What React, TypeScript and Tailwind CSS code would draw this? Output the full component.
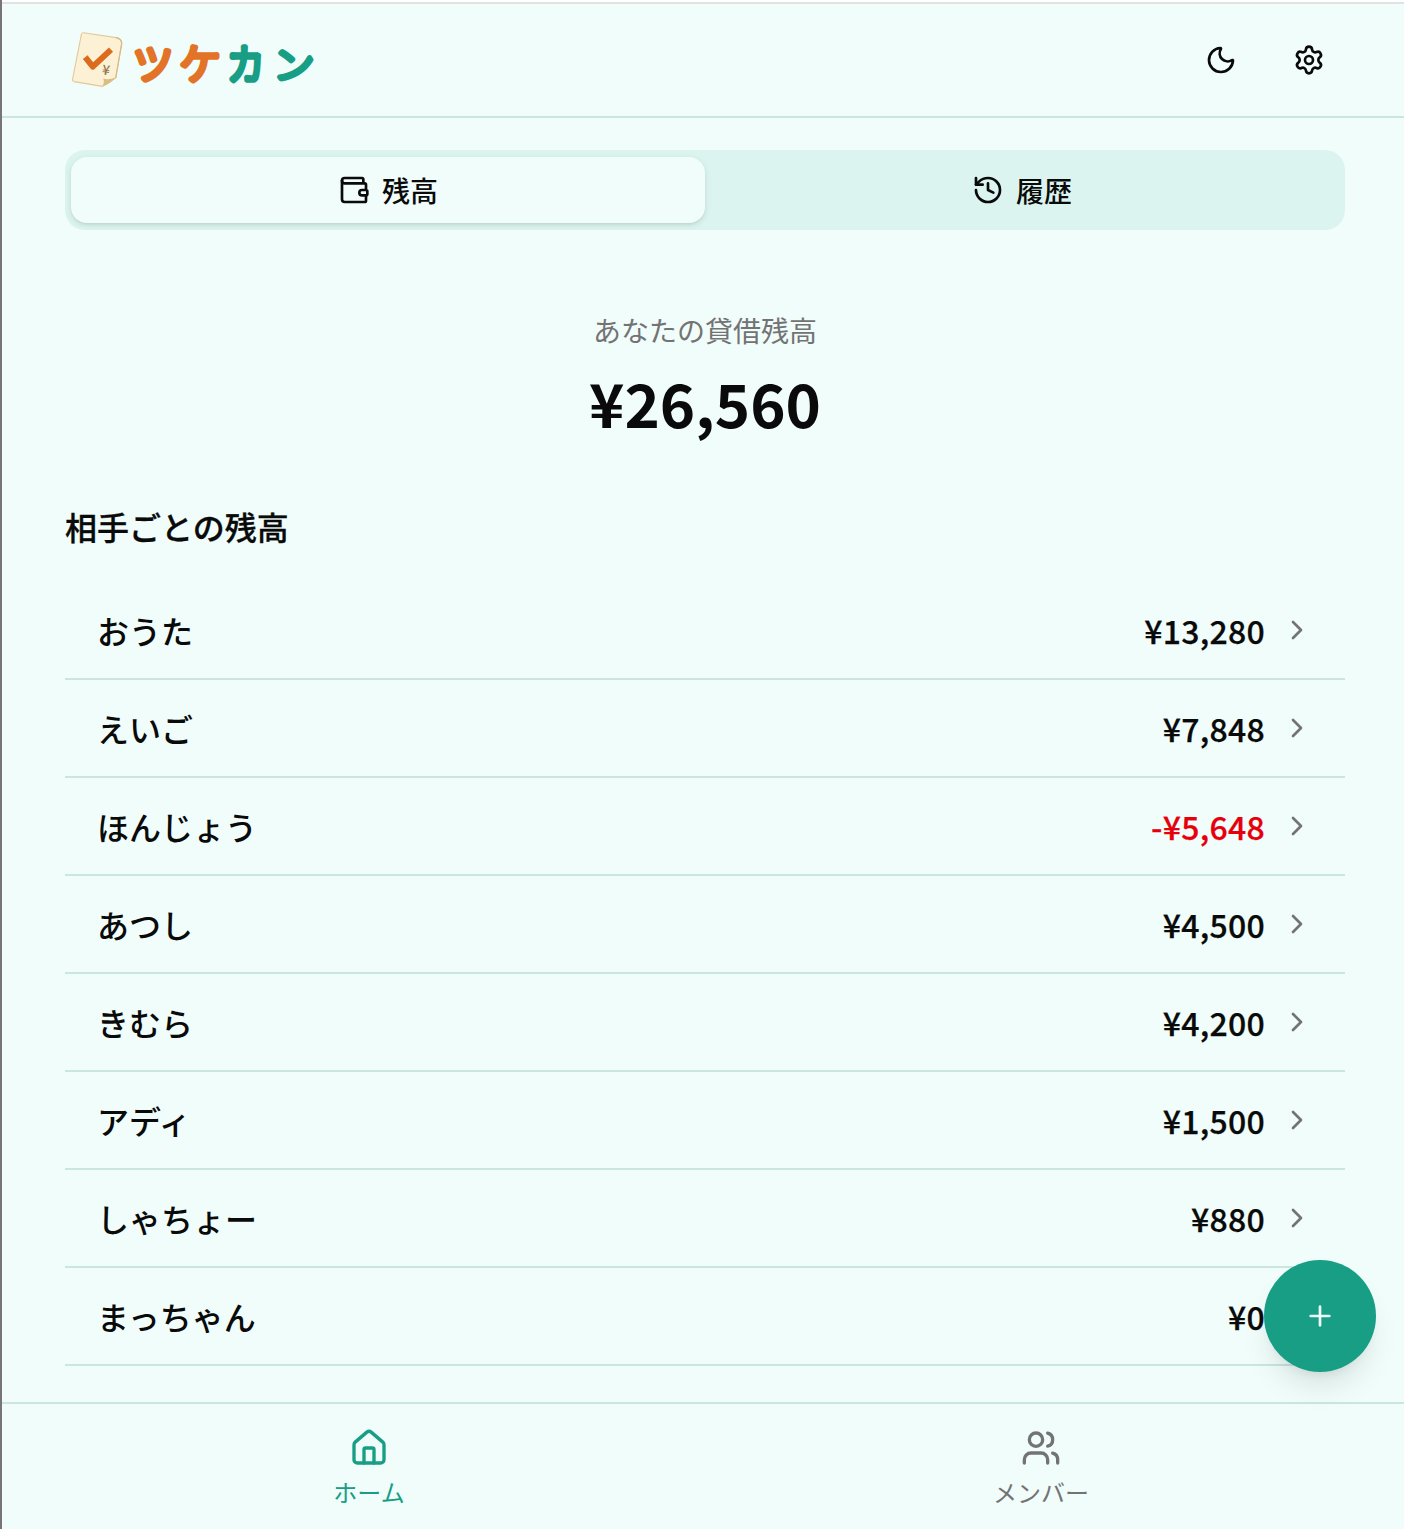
import { ChevronRight, History, House, Moon, Plus, Settings, Users, Wallet } from "lucide-react";

const BALANCES = [
  { name: "おうた", amount: 13280 },
  { name: "えいご", amount: 7848 },
  { name: "ほんじょう", amount: -5648 },
  { name: "あつし", amount: 4500 },
  { name: "きむら", amount: 4200 },
  { name: "アディ", amount: 1500 },
  { name: "しゃちょー", amount: 880 },
  { name: "まっちゃん", amount: 0 },
];

function formatYen(amount: number) {
  const sign = amount < 0 ? "-" : "";
  return `${sign}¥${Math.abs(amount).toLocaleString("en-US")}`;
}

function Logo() {
  return (
    <svg viewBox="66 28 256 64" className="h-16 w-64" role="img" aria-label="ツケカン">
      {/* note */}
      <path
        d="M83.5 32.8 L116 37.6 Q121.5 39 121.6 43.5 L115.6 78 L102.5 86.4 L74 81.6 Q72.2 81 72.6 79 L81.4 34.4 Q82 32.6 83.5 32.8Z"
        fill="#fcf1d4"
        stroke="#e3c899"
        strokeWidth="1.1"
        strokeLinejoin="round"
      />
      <path d="M116 37.4 Q121.8 39 121.8 43.5 L115.8 78" fill="none" stroke="#d8b981" strokeWidth="1.2" />
      <path d="M102.5 86.4 Q104.8 82 103.2 78.6 Q109 80.4 115.6 77.6 Q110 84.4 102.5 86.4Z" fill="#d9bd85" />
      <path d="M85.2 57.2 L92.8 66.6 L111 49.6" fill="none" stroke="#dc6b1e" strokeWidth="6" strokeLinejoin="round" />
      <text x="102.2" y="75" fontSize="13.5" fill="#8d7853" transform="rotate(8 107 70)" className="font-['Noto_Sans_CJK_JP',sans-serif] font-medium">
        ¥
      </text>
      {/* wordmark */}
      <g
        fontSize="41"
        strokeWidth="5.4"
        strokeLinejoin="round"
        strokeLinecap="round"
        className="font-['Noto_Sans_CJK_JP',sans-serif] font-light"
      >
        <g fill="#e37327" stroke="#e37327">
          <text x="132.5" y="79">ツ</text>
          <text x="179.5" y="79.4">ケ</text>
        </g>
        <g fill="#179e85" stroke="#179e85">
          <text transform="translate(227 80) scale(0.91 1.03)">カ</text>
          <text transform="translate(273.2 77.5) scale(1 0.92)">ン</text>
        </g>
      </g>
    </svg>
  );
}

function Header() {
  return (
    <header className="flex h-29 items-center justify-between border-t-2 border-b-2 border-t-[#dfe3e2] border-b-[#cae6df] pr-[63px] pl-16">
      <Logo />
      <div className="flex gap-2">
        <button aria-label="テーマ" className="flex size-20 items-center justify-center">
          <Moon className="size-8" />
        </button>
        <button aria-label="設定" className="mr-[-8px] flex size-20 items-center justify-center">
          <Settings className="size-8" />
        </button>
      </div>
    </header>
  );
}

function Tabs() {
  return (
    <div className="grid h-20 grid-cols-2 rounded-[20px] bg-[#dcf4ef] px-1.5 py-[7px] text-[28px] font-medium">
      <button className="flex items-center justify-center gap-3 rounded-2xl bg-[#f0fdfb] shadow-[0_2px_6px_rgba(0,0,0,0.1),0_2px_4px_-2px_rgba(0,0,0,0.1)]">
        <Wallet className="size-8" />
        残高
      </button>
      <button className="flex items-center justify-center gap-3">
        <History className="size-8" />
        履歴
      </button>
    </div>
  );
}

function BalanceRow({ name, amount }: { name: string; amount: number }) {
  return (
    <li className="flex h-[98px] items-center border-b-2 border-[#cae6df] px-8 text-[32px] leading-[48px] font-medium">
      <span>{name}</span>
      <span
        className={`ml-auto tracking-[0.25px] [-webkit-text-stroke-width:0.25px] ${amount < 0 ? "text-[#e7000b]" : ""}`}
      >
        {formatYen(amount)}
      </span>
      <ChevronRight className="ml-4 size-8 text-[#737373]" />
    </li>
  );
}

function BottomNav() {
  return (
    <nav className="grid h-[127px] shrink-0 grid-cols-2 border-t-2 border-[#cae6df] pr-[27px] pl-[31px] text-2xl">
      <a className="flex flex-col items-center gap-2 pt-6 text-[#179e85]">
        <House className="size-10" />
        ホーム
      </a>
      <a className="flex flex-col items-center gap-2 pt-6 text-[#737373]">
        <Users className="size-10" />
        メンバー
      </a>
    </nav>
  );
}

export default function App() {
  return (
    <div className="h-[1529px] overflow-hidden border-l-2 border-[#77757a] bg-white pt-0.5 font-['Noto_Sans_CJK_JP',sans-serif] text-[#0a0a0a]">
      <div className="relative flex h-full flex-col bg-[#f0fdfb]">
        <Header />
        <main className="min-h-0 flex-1 pt-8 pr-[59px] pl-[63px]">
          <Tabs />
          <section className="flex flex-col items-center pt-20">
            <p className="text-[28px] leading-10 text-[#737373]">あなたの貸借残高</p>
            <p className="mt-4 text-[60px] leading-[72px] font-bold">¥26,560</p>
          </section>
          <h2 className="mt-16 text-[32px] leading-12 font-medium [-webkit-text-stroke-width:0.3px]">
            相手ごとの残高
          </h2>
          <ul className="mt-8">
            {BALANCES.map((balance) => (
              <BalanceRow key={balance.name} {...balance} />
            ))}
          </ul>
        </main>
        <BottomNav />
        <button
          aria-label="追加"
          className="absolute right-7 bottom-[157px] flex size-28 items-center justify-center rounded-full bg-[#179e85] text-[#f0fdfb] shadow-[0_20px_30px_-6px_rgba(0,0,0,0.1),0_8px_12px_-8px_rgba(0,0,0,0.1)]"
        >
          <Plus className="size-8" />
        </button>
      </div>
    </div>
  );
}
